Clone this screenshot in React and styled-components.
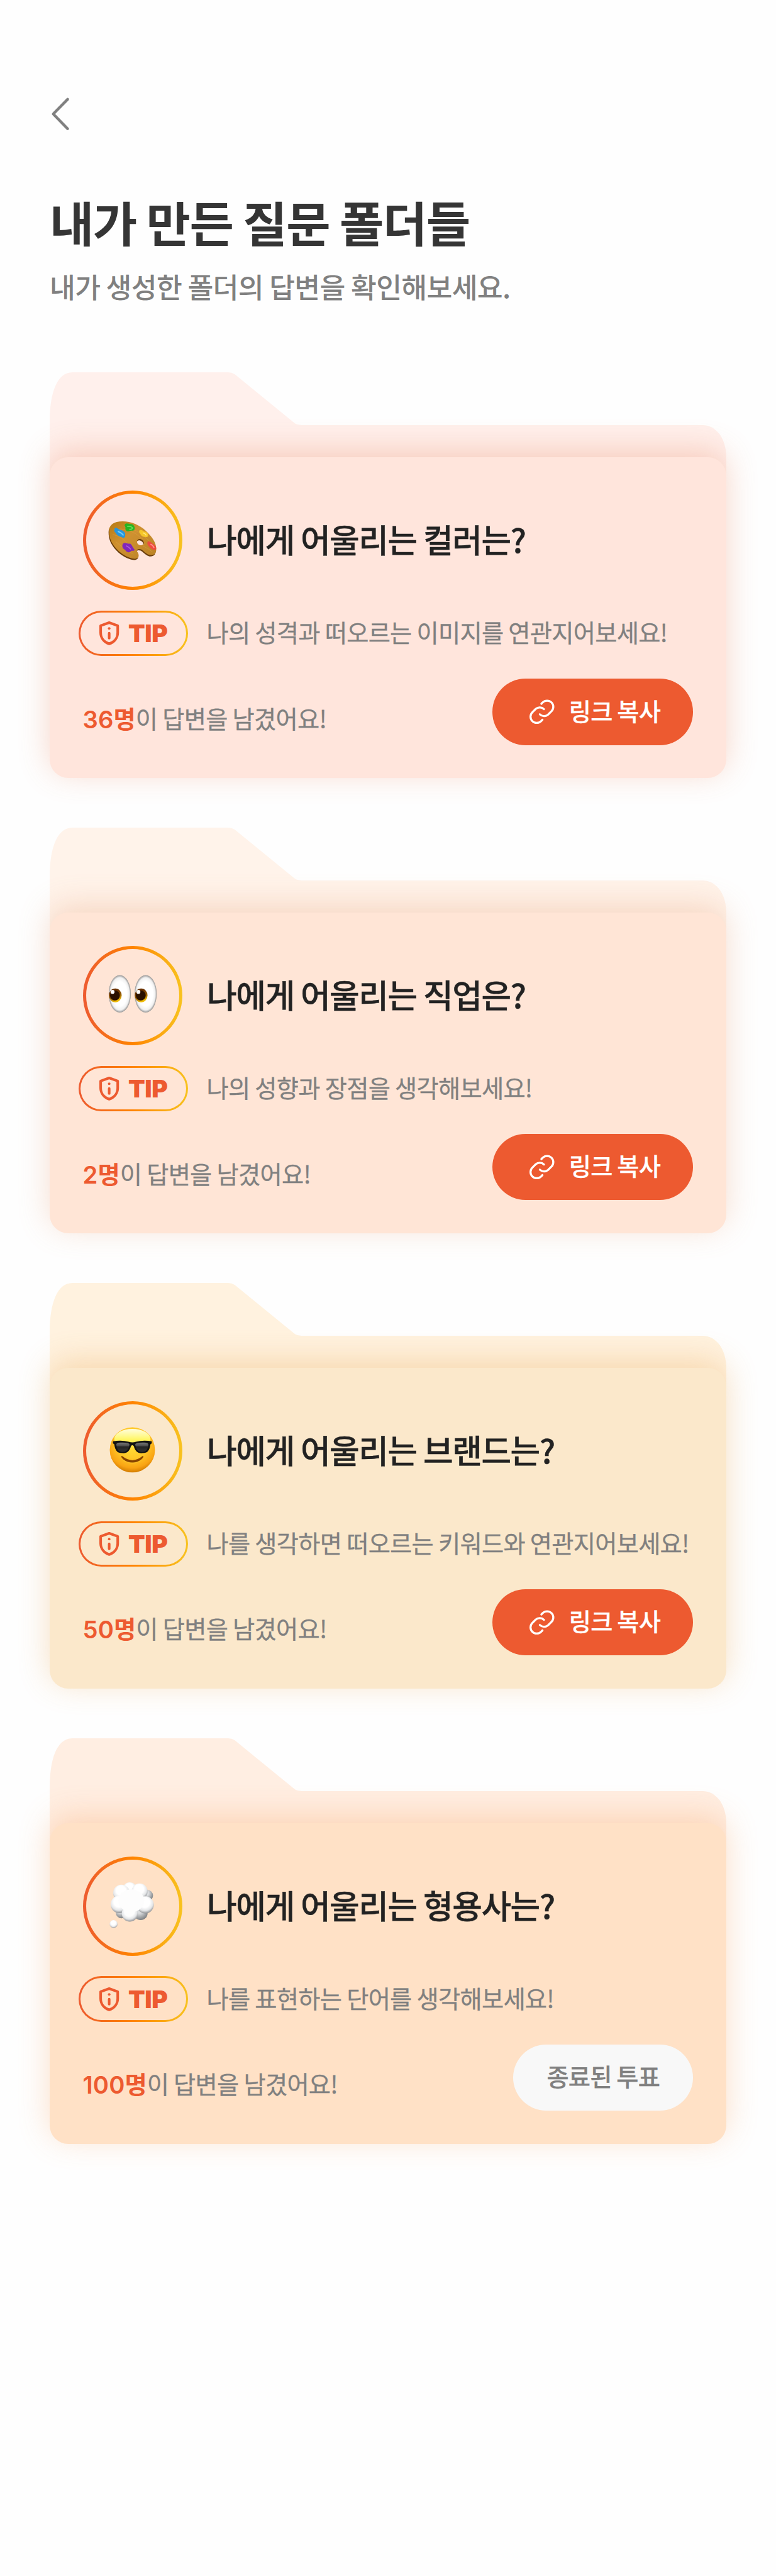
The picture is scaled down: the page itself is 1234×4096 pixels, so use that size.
import React from "react";
import styled, { createGlobalStyle } from "styled-components";

// Design width is 500 units; the page is rendered 1234px wide.
const SCALE = 1234 / 500;
const u = (n) => `${+(n * SCALE).toFixed(3)}px`;

const SUNSET = "linear-gradient(90deg, #ed5a30 0%, #ff8400 50%, #f8c31f 100%)";

const GlobalStyle = createGlobalStyle`
  *, *::before, *::after { box-sizing: border-box; }
  body {
    margin: 0;
    background: #fefefe;
    font-family: Inter, "Noto Sans CJK KR", sans-serif;
  }
  h1, h2, p { margin: 0; }
`;

const Page = styled.main`
  display: flex;
  flex-direction: column;
  width: 1234px;
  height: 4096px;
  padding: ${u(56)} ${u(32)} 0;
  overflow: hidden;
`;

const BackButton = styled.button`
  display: flex;
  align-items: center;
  width: ${u(32)};
  height: ${u(34.6)};
  padding: 0 0 0 ${u(1)};
  border: 0;
  background: none;
`;

const Header = styled.header`
  display: flex;
  flex-direction: column;
  margin-top: ${u(32)};
`;

const Title = styled.h1`
  height: ${u(40)};
  line-height: ${u(40)};
  font-family: "Noto Sans CJK KR", sans-serif;
  font-size: ${u(31)};
  font-weight: 700;
  letter-spacing: -0.0195em;
  color: #353535;
  white-space: nowrap;
`;

const Subtitle = styled.p`
  height: ${u(28)};
  margin-top: ${u(7.6)};
  line-height: ${u(28)};
  font-family: "Noto Sans CJK KR", sans-serif;
  font-size: ${u(18)};
  font-weight: 500;
  letter-spacing: -0.0155em;
  color: #808080;
  white-space: nowrap;
`;

const FolderList = styled.section`
  display: flex;
  flex-direction: column;
  gap: ${u(32)};
  margin-top: ${u(41.8)};
`;

const Folder = styled.article`
  display: grid;
  width: ${u(436)};
  height: ${u(261.333)};
`;

const FolderBack = styled.svg`
  grid-area: 1 / 1;
  width: ${u(436)};
  height: ${u(73)};
  fill: ${(p) => p.$color};
`;

const Card = styled.div`
  grid-area: 1 / 1;
  display: flex;
  flex-direction: column;
  height: ${u(206.667)};
  margin-top: ${u(54.667)};
  padding: ${u(21.333)} ${u(21.333)} ${u(21.333)} ${u(18.667)};
  border-radius: ${u(12)};
  background: ${(p) => p.$color};
  box-shadow: 0 ${u(-4)} ${u(20)} ${(p) => p.$shadow};
`;

const QuestionRow = styled.div`
  display: flex;
  align-items: center;
  gap: ${u(16)};
  padding-left: ${u(2.667)};
`;

const Ring = styled.div`
  display: flex;
  align-items: center;
  justify-content: center;
  width: ${u(64)};
  height: ${u(64)};
  border: 5px solid transparent;
  border-radius: 50%;
  background: linear-gradient(${(p) => p.$fill}, ${(p) => p.$fill}) padding-box, ${SUNSET} border-box;
`;

const Question = styled.h2`
  margin-top: ${u(-1.6)};
  line-height: ${u(30)};
  font-family: "Noto Sans CJK KR", sans-serif;
  font-size: ${u(21)};
  font-weight: 500;
  letter-spacing: -0.028em;
  color: #222;
  -webkit-text-stroke: 0.4px #222;
  white-space: nowrap;
`;

const TipRow = styled.div`
  display: flex;
  align-items: center;
  gap: ${u(11.8)};
  margin-top: ${u(13.333)};
`;

const TipBadge = styled.div`
  display: flex;
  align-items: center;
  gap: ${u(5.9)};
  width: ${u(70.667)};
  height: ${u(29.333)};
  padding-left: ${u(12.2)};
  border: ${u(1.333)} solid transparent;
  border-radius: ${u(14.667)};
  background: linear-gradient(${(p) => p.$fill}, ${(p) => p.$fill}) padding-box, ${SUNSET} border-box;
  font-family: Inter, sans-serif;
  font-size: ${u(15.8)};
  font-weight: 900;
  line-height: 1;
  letter-spacing: -0.01em;
  color: #ed5a30;
`;

const TipText = styled.p`
  margin-top: ${u(-1.8)};
  font-family: "Noto Sans CJK KR", sans-serif;
  font-size: ${u(15.5)};
  line-height: ${u(24)};
  letter-spacing: -0.0185em;
  color: #808080;
  -webkit-text-stroke: 0.3px #808080;
  white-space: nowrap;
`;

const Footer = styled.div`
  display: flex;
  align-items: flex-start;
  justify-content: space-between;
  margin-top: ${u(14.667)};
  padding-left: ${u(2.667)};
`;

const Answers = styled.p`
  margin-top: ${u(13.1)};
  font-family: "Noto Sans CJK KR", sans-serif;
  font-size: ${u(15.5)};
  line-height: ${u(24)};
  letter-spacing: -0.0185em;
  color: #808080;
  -webkit-text-stroke: 0.3px #808080;
  white-space: nowrap;
`;

const Count = styled.strong`
  font-family: Inter, "Noto Sans CJK KR", sans-serif;
  font-weight: 600;
  letter-spacing: 0.002em;
  color: #ed5a30;
  -webkit-text-stroke: 0;
`;

const PillButton = styled.button`
  display: flex;
  align-items: center;
  justify-content: ${(p) => (p.$ended ? "center" : "flex-start")};
  gap: ${u(9.3)};
  width: ${(p) => (p.$ended ? u(116) : u(129.333))};
  height: ${u(42.667)};
  padding: 0 0 0 ${(p) => (p.$ended ? 0 : u(24))};
  border: 0;
  border-radius: ${u(21.333)};
  background: ${(p) => (p.$ended ? "#f8f8f8" : "#ed5a30")};
  color: ${(p) => (p.$ended ? "#808080" : "#fff")};
`;

const PillLabel = styled.span`
  margin-top: ${u(-1.8)};
  font-family: "Noto Sans CJK KR", sans-serif;
  font-size: ${u(15.5)};
  font-weight: 500;
  line-height: 1;
  letter-spacing: -0.022em;
  -webkit-text-stroke: 0.25px currentColor;
  white-space: nowrap;
`;

const Icon = styled.svg`
  display: block;
  flex: none;
  width: ${(p) => u(p.$w)};
  height: ${(p) => u(p.$h)};
  overflow: visible;
`;

const BackIcon = () => (
  <Icon $w={12} $h={21.333} viewBox="0 0 36 64" fill="none" stroke="#808080" strokeWidth="5.400" strokeLinecap="round" strokeLinejoin="round">
    <path d="M32.300 3.500 4.500 32 32.300 60.500" />
  </Icon>
);

const ShieldIcon = () => (
  <Icon $w={12.667} $h={15.333} viewBox="0 0 38 46" fill="none" stroke="#ed5a30" strokeWidth="5" strokeLinejoin="round" strokeLinecap="round">
    <path d="M19 2.500 35.500 8.400V22C35.500 32 29 40 19 43.500 9 40 2.500 32 2.500 22V8.400Z" />
    <path d="M19 23V32.500" />
    <circle cx="19" cy="13.700" r="2.500" fill="#ed5a30" stroke="none" />
  </Icon>
);

const LinkIcon = () => (
  <Icon $w={16} $h={16} viewBox="0 0 48 48" fill="none" stroke="#fff" strokeWidth="4" strokeLinecap="round">
    <path d="M23 8.500 25.500 6A12 12 0 0 1 42.500 23L36 29.500A12 12 0 0 1 20 29" />
    <path d="M25 39.500 22.500 42A12 12 0 0 1 5.500 25L12 18.500A12 12 0 0 1 28 19" />
  </Icon>
);

const Palette = () => (
  <Icon $w={32} $h={32} viewBox="0 0 96 96">
    <defs>
      <linearGradient id="wood" x1="0" y1="0" x2="1" y2="1">
        <stop offset="0" stopColor="#b87a12" />
        <stop offset=".4" stopColor="#cf9130" />
        <stop offset="1" stopColor="#b98225" />
      </linearGradient>
      <path id="board" fillRule="evenodd" d="M3 27C3 16 12 9 29 9 46 9 62 16 74 27 86 38 94 50 94 61 95 70 90 75 82 74 76 73 70 66 65 63 60 61 56 63 57 67 59 70 61 73 60 77 58 82 51 82 43 79 28 74 14 61 7 47 4 40 3 34 3 27ZM57 48C57 52 60 55 65 55 69 55 71 53 70 49 69 46 66 43 62 43 59 43 57 45 57 48Z" />
    </defs>
    <g transform="translate(0 3.300)">
      <use href="#board" fill="#6b3f0c" transform="translate(-1 2.500)" />
      <use href="#board" fill="url(#wood)" />
      <path d="M12 25Q40 18 68 43M10 34Q32 38 50 66M32 18Q60 24 82 48M16 48Q34 64 50 72M68 56Q80 62 87 68" fill="none" stroke="#dfa447" strokeWidth="1.200" opacity=".5" />
      <path d="M34 14C37 11 41 14 46 14 51 15 54 21 52 25 50 28 45 26 41 28 37 29 33 25 35 21 34 19 32 17 34 14Z" fill="#27b521" />
      <path d="M38 19Q44 17 48 21 48 25 42 24" fill="none" stroke="#67df5c" strokeWidth="2" />
      <path d="M14 22C17 19 20 24 24 25 30 26 36 31 34 35 35 41 30 42 27 39 22 38 17 35 16 31 12 29 13 25 14 22Z" fill="#2796dc" />
      <path d="M20 28Q27 31 31 36" fill="none" stroke="#72cdf7" strokeWidth="2.500" />
      <path d="M62 26C66 23 69 29 74 29 78 31 80 36 77 39 73 40 65 38 64 34 61 31 60 28 62 26Z" fill="#f5c62a" />
      <path d="M68 31Q73 32 75 36" fill="none" stroke="#ffe778" strokeWidth="2" />
      <path d="M78 48C82 46 85 51 89 53 93 56 96 61 93 64 88 65 82 61 80 57 77 54 76 50 78 48Z" fill="#ee4b40" />
      <path d="M83 53Q88 55 90 60" fill="none" stroke="#ff958c" strokeWidth="2" />
      <path d="M30 52C34 48 39 53 44 52 48 55 48 59 52 63 53 67 48 65 46 66 41 71 36 68 34 64 29 62 27 56 30 52Z" fill="#8127b8" />
      <path d="M36 56Q42 59 45 63" fill="none" stroke="#ae5bdc" strokeWidth="2" />
    </g>
  </Icon>
);

const Eyes = () => (
  <Icon $w={32} $h={32} viewBox="0 0 96 96">
    <defs>
      <radialGradient id="eyeball" cx=".5" cy=".5" r=".5">
        <stop offset=".65" stopColor="#fff" />
        <stop offset=".86" stopColor="#f0f0f0" />
        <stop offset="1" stopColor="#929292" />
      </radialGradient>
      <linearGradient id="iris" x1="0" y1="0" x2=".35" y2="1">
        <stop offset=".3" stopColor="#693000" />
        <stop offset=".7" stopColor="#996000" />
        <stop offset="1" stopColor="#efbd08" />
      </linearGradient>
      <g id="eye">
        <ellipse cx="23.700" cy="45.300" rx="21.400" ry="36.300" fill="url(#eyeball)" />
        <ellipse cx="15" cy="48.300" rx="12.300" ry="13.300" fill="url(#iris)" />
        <circle cx="14.300" cy="48.500" r="9.500" fill="#2a1000" />
        <circle cx="9.700" cy="41.500" r="3.800" fill="#fff" />
      </g>
    </defs>
    <use href="#eye" />
    <use href="#eye" x="50" />
  </Icon>
);

const CoolFace = () => (
  <Icon $w={32} $h={32} viewBox="0 0 96 96">
    <defs>
      <radialGradient id="face" cx=".5" cy=".35" r=".66">
        <stop offset="0" stopColor="#ffe23a" />
        <stop offset=".5" stopColor="#ffc928" />
        <stop offset=".83" stopColor="#f9a313" />
        <stop offset="1" stopColor="#cf7900" />
      </radialGradient>
      <linearGradient id="shine" x1="0" y1="0" x2="0" y2="1">
        <stop offset="0" stopColor="#fffde0" />
        <stop offset=".5" stopColor="#fff76a" />
        <stop offset="1" stopColor="#ffe23c" stopOpacity="0" />
      </linearGradient>
      <linearGradient id="lens" x1="0" y1="0" x2="0" y2="1">
        <stop offset="0" stopColor="#777" />
        <stop offset=".38" stopColor="#4a4a4a" />
        <stop offset=".42" stopColor="#222" />
        <stop offset="1" stopColor="#333" />
      </linearGradient>
    </defs>
    <circle cx="48" cy="46.700" r="43.700" fill="url(#face)" />
    <ellipse cx="48" cy="26" rx="35" ry="20" fill="url(#shine)" />
    <path d="M10.500 30Q28 27.500 41 31Q48 33.500 55 31Q68 27.500 85.500 30V34L83 36C81 49 77 53 68 53 58 54 53 48 51 40 49 37 47 37 45 40 43 48 38 54 28 53 19 53 15 49 13 36L10.500 34Z" fill="#121212" />
    <path d="M17 36Q17 33 25 32.500 42 32 42.500 36C41 46 37 51 29 50.500 21 51 18 46 17 36ZM53.500 36Q54 32 71 32.500 79 33 79 36C78 46 75 51 67 50.500 59 51 55 46 53.500 36Z" fill="url(#lens)" />
    <path d="M28 58.500Q48 75 68 58.500Q70 58 69 61C59 75 37 75 27 61Q26 58 28 58.500Z" fill="#884400" />
    <path d="M31 67Q48 77 65 67" fill="none" stroke="#ffc52c" strokeWidth="1.500" opacity=".7" />
  </Icon>
);

const Thought = () => (
  <Icon $w={32} $h={32} viewBox="0 0 96 96">
    <defs>
      <radialGradient id="puff" cx=".47" cy=".36" r=".64">
        <stop offset=".45" stopColor="#fff" />
        <stop offset=".75" stopColor="#e4e6e8" />
        <stop offset="1" stopColor="#8f9194" />
      </radialGradient>
      <radialGradient id="puffShade" cx=".4" cy=".3" r=".7">
        <stop offset=".3" stopColor="#dcdee0" />
        <stop offset="1" stopColor="#7c7f82" />
      </radialGradient>
    </defs>
    <circle cx="43" cy="16" r="13.500" fill="url(#puff)" />
    <circle cx="77" cy="28" r="11" fill="url(#puffShade)" />
    <circle cx="27" cy="61" r="11" fill="url(#puffShade)" />
    <circle cx="64" cy="62" r="13.500" fill="url(#puffShade)" />
    <circle cx="27" cy="23" r="16" fill="url(#puff)" />
    <circle cx="62" cy="20" r="15.500" fill="url(#puff)" />
    <circle cx="23" cy="45" r="17" fill="url(#puff)" />
    <circle cx="73" cy="46" r="16.500" fill="url(#puff)" />
    <circle cx="43" cy="63" r="15.500" fill="url(#puff)" />
    <ellipse cx="46" cy="38" rx="25" ry="22" fill="#fdfdfd" />
    <ellipse cx="43" cy="58" rx="10" ry="10" fill="#fdfdfd" />
    <circle cx="11.700" cy="83" r="7.600" fill="url(#puff)" />
  </Icon>
);

const folders = [
  { id: "color", Emoji: Palette, question: "나에게 어울리는 컬러는?", tip: "나의 성격과 떠오르는 이미지를 연관지어보세요!", count: 36, body: "#ffe5dc", back: "#fff0ec", shadow: "rgba(230, 120, 76, 0.3)" },
  { id: "job", Emoji: Eyes, question: "나에게 어울리는 직업은?", tip: "나의 성향과 장점을 생각해보세요!", count: 2, body: "#ffe5d6", back: "#fff3ea", shadow: "rgba(226, 146, 98, 0.3)" },
  { id: "brand", Emoji: CoolFace, question: "나에게 어울리는 브랜드는?", tip: "나를 생각하면 떠오르는 키워드와 연관지어보세요!", count: 50, body: "#fbe8cb", back: "#fff2df", shadow: "rgba(228, 152, 56, 0.3)" },
  { id: "adjective", Emoji: Thought, question: "나에게 어울리는 형용사는?", tip: "나를 표현하는 단어를 생각해보세요!", count: 100, ended: true, body: "#ffe1c6", back: "#ffeee2", shadow: "rgba(244, 150, 76, 0.3)" },
];

function FolderItem({ Emoji, question, tip, count, ended, body, back, shadow }) {
  return (
    <Folder>
      <FolderBack $color={back} viewBox="0 0 1308 219">
        <path d="M0 219V96C0 40 14 0 44 0H345Q352 0 358 4L473 98Q478 102 487 102H1262C1290 102 1308 130 1308 164V219Z" />
      </FolderBack>
      <Card $color={body} $shadow={shadow}>
        <QuestionRow>
          <Ring $fill={body}>
            <Emoji />
          </Ring>
          <Question>{question}</Question>
        </QuestionRow>
        <TipRow>
          <TipBadge $fill={body}>
            <ShieldIcon />
            TIP
          </TipBadge>
          <TipText>{tip}</TipText>
        </TipRow>
        <Footer>
          <Answers>
            <Count>{count}명</Count>이 답변을 남겼어요!
          </Answers>
          <PillButton $ended={ended}>
            {!ended && <LinkIcon />}
            <PillLabel>{ended ? "종료된 투표" : "링크 복사"}</PillLabel>
          </PillButton>
        </Footer>
      </Card>
    </Folder>
  );
}

export default function App() {
  return (
    <>
      <GlobalStyle />
      <Page>
        <BackButton aria-label="뒤로">
          <BackIcon />
        </BackButton>
        <Header>
          <Title>내가 만든 질문 폴더들</Title>
          <Subtitle>내가 생성한 폴더의 답변을 확인해보세요.</Subtitle>
        </Header>
        <FolderList>
          {folders.map((f) => (
            <FolderItem key={f.id} {...f} />
          ))}
        </FolderList>
      </Page>
    </>
  );
}
